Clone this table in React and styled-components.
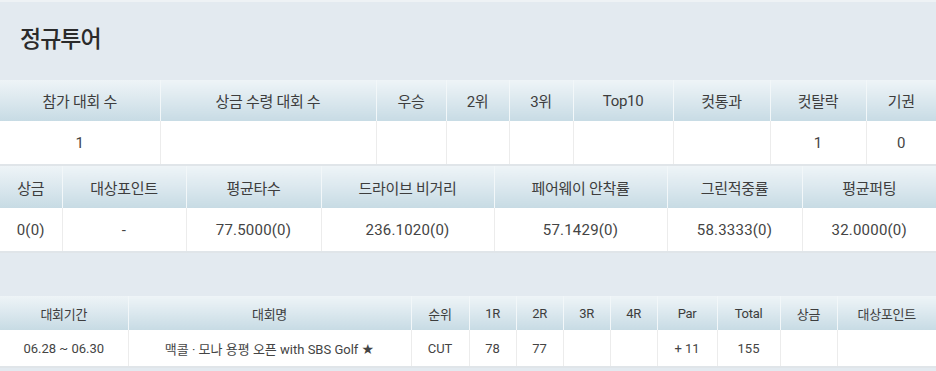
import React from 'react';
import styled, { createGlobalStyle } from 'styled-components';

const GlobalStyle = createGlobalStyle`
    html, body {
        margin: 0;
        padding: 0;
        background: #e3eaf0;
    }
    body {
        font-family: Roboto, "Noto Sans CJK KR", sans-serif;
        color: #444;
    }
`;

const Page = styled.div`
    width: 936px;
    border-top: 2px solid #eef2f5;
    background: #e3eaf0;
`;

const Title = styled.h2`
    margin: 0;
    height: 78px;
    padding: 0 0 9px 20px;
    display: flex;
    align-items: center;
    box-sizing: border-box;
    font-family: "Noto Sans CJK KR", sans-serif;
    font-size: 23px;
    font-weight: 500;
    letter-spacing: -1px;
    color: #2b2b2b;
`;

const TableBox = styled.div`
    border-bottom: 2px solid #e0e5e9;
    margin-bottom: ${p => p.gap || 0}px;
`;

const Table = styled.table`
    width: 100%;
    border-collapse: collapse;
    table-layout: fixed;
    background: #fff;
`;

const Head = styled.th`
    height: ${p => p.h}px;
    padding: 0;
    font-weight: 400;
    font-size: ${p => p.fs}px;
    letter-spacing: -0.3px;
    color: #3d3d3d;
    background: linear-gradient(to bottom, #eef4f7 0%, #dde9ef 45%, #c7dbe4 100%);
    border-left: 1px solid #f2f7f9;
    &:first-child { border-left: 0; }
`;

const Cell = styled.td`
    height: ${p => p.h}px;
    padding: 0;
    text-align: center;
    font-size: ${p => p.fs}px;
    letter-spacing: ${p => (p.fs > 14 ? 0.2 : 0)}px;
    color: #444;
    border-left: 1px solid #ececec;
    &:first-child { border-left: 0; }
`;

const Star = styled.span`
    font-family: "DejaVu Sans", sans-serif;
    font-size: 14px;
`;

const summary = {
    cols: [160, 216, 70, 63, 64, 100, 97, 96, 70],
    head: ['참가 대회 수', '상금 수령 대회 수', '우승', '2위', '3위', 'Top10', '컷통과', '컷탈락', '기권'],
    row: ['1', '', '', '', '', '', '', '1', '0'],
};

const stats = {
    cols: [62, 124, 135, 173, 173, 135, 134],
    head: ['상금', '대상포인트', '평균타수', '드라이브 비거리', '페어웨이 안착률', '그린적중률', '평균퍼팅'],
    row: ['0(0)', '-', '77.5000(0)', '236.1020(0)', '57.1429(0)', '58.3333(0)', '32.0000(0)'],
};

const results = {
    cols: [128, 283, 58, 47, 47, 47, 47, 60, 63, 57, 99],
    head: ['대회기간', '대회명', '순위', '1R', '2R', '3R', '4R', 'Par', 'Total', '상금', '대상포인트'],
    row: ['06.28 ~ 06.30', <>맥콜 · 모나 용평 오픈 with SBS Golf <Star>★</Star></>, 'CUT', '78', '77', '', '', '+ 11', '155', '', ''],
};

function DataTable({ data, headH, rowH, fs, gap }) {
    return (
        <TableBox gap={gap}>
            <Table>
                <colgroup>
                    {data.cols.map((w, i) => <col key={i} width={w} />)}
                </colgroup>
                <thead>
                    <tr>
                        {data.head.map((h, i) => <Head key={i} h={headH} fs={fs}>{h}</Head>)}
                    </tr>
                </thead>
                <tbody>
                    <tr>
                        {data.row.map((v, i) => <Cell key={i} h={rowH} fs={fs}>{v}</Cell>)}
                    </tr>
                </tbody>
            </Table>
        </TableBox>
    );
}

export default function App() {
    return (
        <>
            <GlobalStyle />
            <Page>
                <Title>정규투어</Title>
                <DataTable data={summary} headH={41} rowH={43} fs={15} />
                <DataTable data={stats} headH={42} rowH={43} fs={15} gap={43} />
                <DataTable data={results} headH={34} rowH={36} fs={13} />
            </Page>
        </>
    );
}
